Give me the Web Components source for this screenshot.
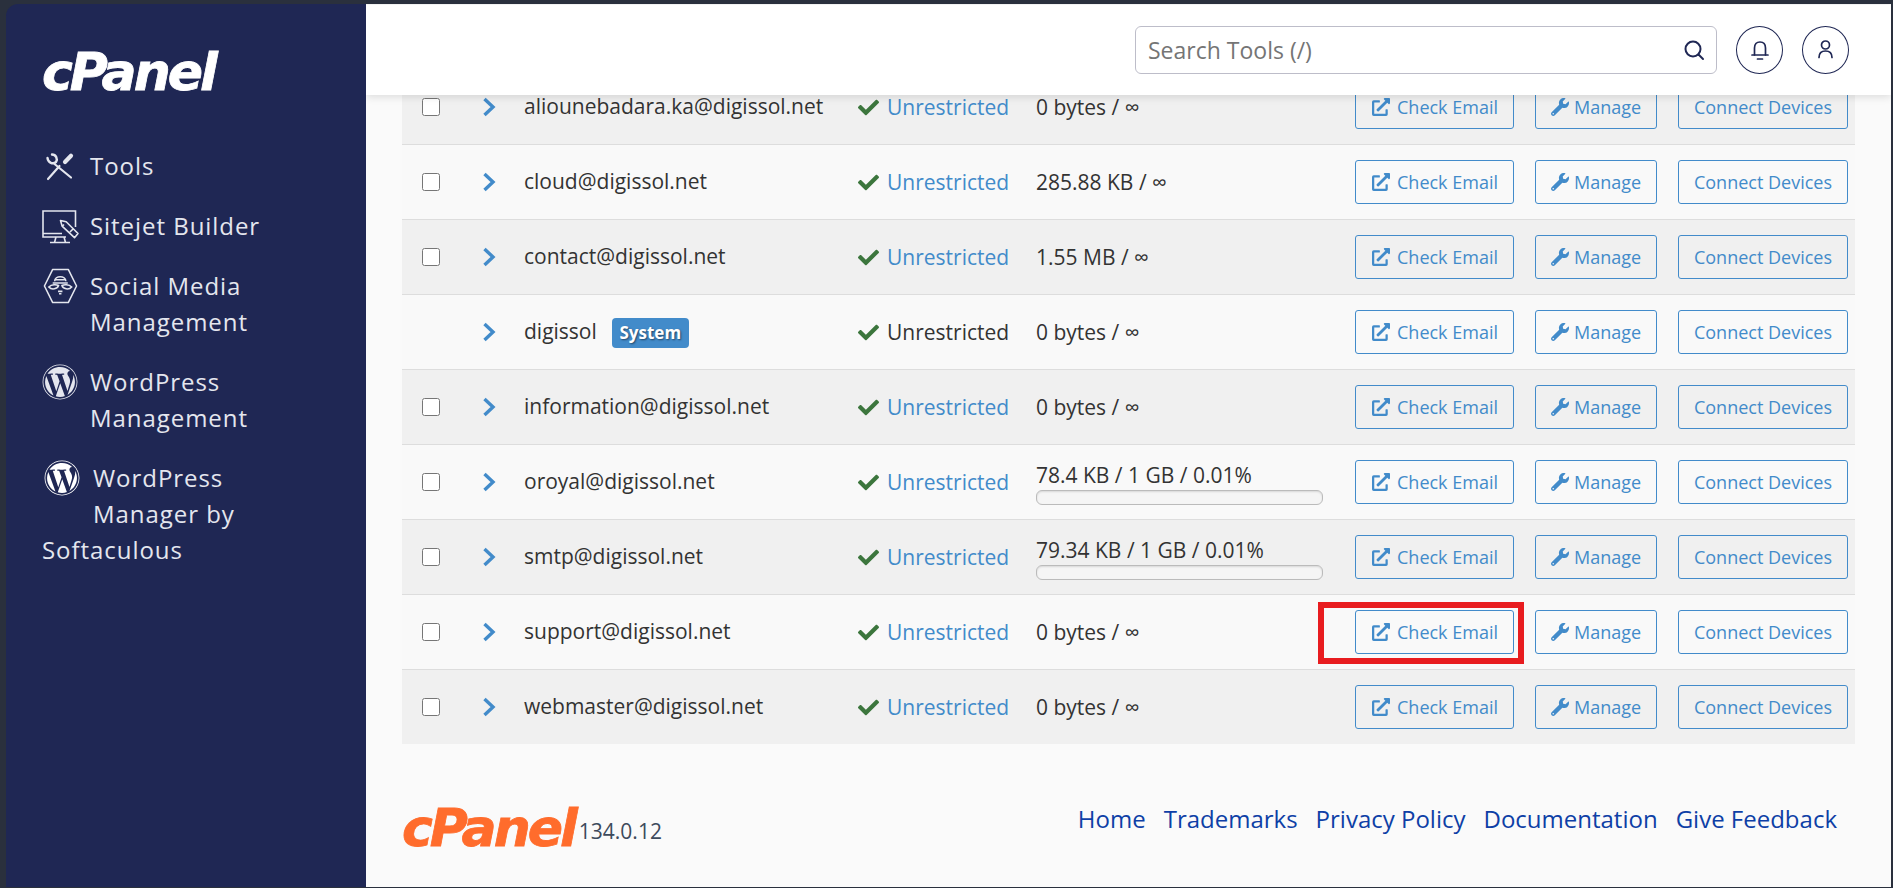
<!DOCTYPE html>
<html lang="en">
<head>
<meta charset="utf-8">
<title>Email Accounts</title>
<style>
  html, body { margin: 0; height: 100%; }
  body {
    background: #2a303d;
    font-family: "Open Sans", "Liberation Sans", sans-serif;
    color: #333;
    overflow: hidden;
  }
</style>
</head>
<body>
<cp-app>
  <cp-sidebar slot="side">
    <cp-nav icon="tools">Tools</cp-nav>
    <cp-nav icon="sitejet">Sitejet Builder</cp-nav>
    <cp-nav icon="social">Social Media Management</cp-nav>
    <cp-nav icon="wp">WordPress Management</cp-nav>
    <cp-nav icon="wp2" wrap>WordPress Manager by Softaculous</cp-nav>
  </cp-sidebar>
  <cp-topbar slot="top"></cp-topbar>
  <cp-row email="aliounebadara.ka@digissol.net" usage="0 bytes / ∞"></cp-row>
  <cp-row email="cloud@digissol.net" usage="285.88 KB / ∞"></cp-row>
  <cp-row email="contact@digissol.net" usage="1.55 MB / ∞"></cp-row>
  <cp-row email="digissol" usage="0 bytes / ∞" system></cp-row>
  <cp-row email="information@digissol.net" usage="0 bytes / ∞"></cp-row>
  <cp-row email="oroyal@digissol.net" usage="78.4 KB / 1 GB / 0.01%" bar></cp-row>
  <cp-row email="smtp@digissol.net" usage="79.34 KB / 1 GB / 0.01%" bar></cp-row>
  <cp-row email="support@digissol.net" usage="0 bytes / ∞" marked></cp-row>
  <cp-row email="webmaster@digissol.net" usage="0 bytes / ∞"></cp-row>
  <cp-footer slot="foot"></cp-footer>
</cp-app>

<script>
const ICONS = {
  tools: `<svg width="30" height="30" viewBox="0 0 30 30" fill="none" stroke="#e4e6ee" stroke-width="2.2" stroke-linecap="round">
    <path d="M3 28 L14.5 15"/><path d="M20 11 L26 4.800" stroke-width="4.200"/><path d="M9.500 13 L26 26.500"/>
    <path d="M7 3.500 C11 3.500 13 8 11 11 C8 13.500 3 12 2.500 7" stroke-width="2.400"/></svg>`,
  sitejet: `<svg width="36" height="35" viewBox="0 0 36 35" fill="none" stroke="#e4e6ee" stroke-width="1.6" style="overflow:visible">
    <path d="M33.500 18 V2 H1 V28 H24"/><path d="M1 24.500 H20"/><path d="M14 28 L12.500 33.500 M22 28 L23.500 33.500 M8 33.500 H28"/>
    <path d="M18.500 11.500 L24.200 12.700 L36 24.500 L32.500 28.700 L20.100 17.100Z M22 15.500 L20.500 17 M31 20 L28 23" stroke-linejoin="round"/></svg>`,
  social: `<svg width="37" height="36" viewBox="0 0 37 36" fill="none" stroke="#e4e6ee" stroke-width="1.600">
    <path d="M11 1 H27 L35.500 18 L27 35 H11 L2.500 18Z" stroke-linejoin="round"/>
    <path d="M13 13 C13 7 24.500 7 24.500 13 M13.500 11.500 H24 M11 15 H26.500 M7 19 C10 16 15 16.500 17 17.500 C16 21 10 22.500 7 19Z M30.500 19 C27.500 16 22.500 16.500 20.500 17.500 C21.500 21 27.500 22.500 30.500 19Z M16.500 23.500 H21 M17.500 26 H20"/></svg>`,
  wp: wpIcon("#e4e6ee"),
  wp2: wpIcon("#ffffff")
};

function wpIcon(color) {
  return `<svg width="36" height="36" viewBox="0 0 512 512" fill="${color}"><path d="M61.7 169.4l101.5 278C92.2 413 43.3 340.2 43.3 256c0-30.9 6.6-60.1 18.4-86.6zm337.9 75.9c0-26.3-9.4-44.5-17.5-58.7-10.8-17.5-20.9-32.4-20.9-49.9 0-19.6 14.8-37.8 35.7-37.8.9 0 1.8.1 2.8.2-37.9-34.7-88.3-55.9-143.7-55.9-74.3 0-139.7 38.1-177.8 95.9 5 .2 9.7.3 13.7.3 22.2 0 56.7-2.7 56.7-2.7 11.5-.7 12.8 16.2 1.4 17.5 0 0-11.5 1.4-24.3 2l77.5 230.4L249.8 247l-33.1-90.8c-11.5-.7-22.3-2-22.3-2-11.5-.7-10.1-18.2 1.3-17.5 0 0 35.1 2.7 56 2.7 22.2 0 56.7-2.7 56.7-2.7 11.5-.7 12.8 16.2 1.4 17.5 0 0-11.5 1.3-24.3 2l76.9 228.7 21.2-70.9c9-29.4 16-50.5 16-68.7zm-139.9 29.3l-63.8 185.5c19.1 5.6 39.2 8.7 60.1 8.7 24.8 0 48.5-4.3 70.6-12.1-.6-.9-1.1-1.9-1.5-2.9l-65.4-179.2zm183-120.7c.9 6.8 1.4 14 1.4 21.9 0 21.6-4 45.8-16.2 76.2l-65 187.9C426.2 403 468.7 334.5 468.7 256c0-37-9.4-71.8-26-102.1zM504 256c0 136.8-111.3 248-248 248C119.2 504 8 392.7 8 256 8 119.2 119.2 8 256 8c136.7 0 248 111.2 248 248zm-11.4 0c0-130.5-106.2-236.6-236.6-236.6C125.5 19.4 19.4 125.5 19.4 256S125.6 492.6 256 492.6c130.5 0 236.6-106.1 236.6-236.6z"/></svg>`;
}

class CpApp extends HTMLElement {
  constructor() {
    super();
    this.attachShadow({ mode: "open" }).innerHTML = `
      <style>
        :host {
          display: grid;
          grid-template-columns: 360px 1fr;
          height: 883px;
          margin: 4px 2px 1px 6px;
          border-top-left-radius: 12px;
          overflow: hidden;
        }
        main {
          background: #fafafa;
          min-width: 0;
          display: flex;
          flex-direction: column;
          overflow: hidden;
          padding-top: 1px;
        }
        .table { padding: 0 36px; margin-top: -25px; }
      </style>
      <slot name="side"></slot>
      <main>
        <slot name="top"></slot>
        <div class="table"><slot></slot></div>
        <slot name="foot"></slot>
      </main>`;
  }
}

class CpLogo extends HTMLElement {
  constructor() {
    super();
    this.attachShadow({ mode: "open" }).innerHTML = `
      <style>
        :host {
          display: inline-block;
          font: italic 700 52px/44px "DejaVu Sans", sans-serif;
          letter-spacing: -3px;
          color: var(--logo, #fff);
          -webkit-text-stroke: .8px var(--logo, #fff);
          white-space: nowrap;
        }
      </style>cPanel`;
  }
}

class CpSidebar extends HTMLElement {
  constructor() {
    super();
    this.attachShadow({ mode: "open" }).innerHTML = `
      <style>
        :host {
          display: flex;
          flex-direction: column;
          background: #1f2754;
          padding: 46px 16px 0 36px;
          box-sizing: border-box;
          color: #e4e6ee;
        }
        .logo { height: 44px; margin-bottom: 54px; }
        nav { display: flex; flex-direction: column; gap: 24px; }
      </style>
      <div class="logo"><cp-logo></cp-logo></div>
      <nav><slot></slot></nav>`;
  }
}

class CpNav extends HTMLElement {
  constructor() {
    super();
    const icon = ICONS[this.getAttribute("icon")];
    const wrap = this.hasAttribute("wrap");
    this.attachShadow({ mode: "open" }).innerHTML = `
      <style>
        :host {
          display: ${wrap ? "block" : "flex"};
          ${wrap ? "width: 250px;" : ""}
          font-size: 24px;
          line-height: 36px;
          letter-spacing: .95px;
          gap: 12px;
        }
        .ic { flex: 0 0 36px; width: 36px; height: 36px; display: flex; align-items: center; justify-content: center; }
        .ic.float { float: left; height: 60px; align-items: flex-start; margin: 0 13px 0 2px; width: 36px; }
        .txt { width: 200px; }
      </style>
      <span class="ic ${wrap ? "float" : ""}">${icon}</span>
      ${wrap ? "<slot></slot>" : '<span class="txt"><slot></slot></span>'}`;
  }
}

class CpTopbar extends HTMLElement {
  constructor() {
    super();
    this.attachShadow({ mode: "open" }).innerHTML = `
      <style>
        :host {
          display: flex;
          flex: 0 0 90px;
          height: 90px;
          box-sizing: border-box;
          align-items: center;
          justify-content: flex-end;
          gap: 19px;
          padding: 0 42px 0 0;
          background: #fff;
          box-shadow: 0 2px 8px rgba(0,0,0,.12);
          position: relative;
          z-index: 2;
        }
        .search {
          width: 582px; height: 48px; box-sizing: border-box;
          border: 1px solid #bdbdc9; border-radius: 6px;
          display: flex; align-items: center; padding: 0 11px 0 12px;
        }
        input {
          flex: 1; border: 0; outline: 0; background: none; padding: 0; min-width: 0;
          font: 23px "Open Sans", sans-serif;
        }
        input::placeholder { color: #757575; opacity: 1; }
        .round {
          width: 47px; height: 48px; box-sizing: border-box; border: 1.5px solid #1f2754;
          border-radius: 50%; display: flex; align-items: center; justify-content: center;
        }
        svg { display: block; fill: none; stroke: #1f2754; stroke-linecap: round; }
      </style>
      <div class="search">
        <input type="text" placeholder="Search Tools (/)">
        <svg width="22" height="22" viewBox="0 0 22 22" stroke-width="2"><circle cx="10" cy="10" r="7.500"/><path d="M15.500 15.500 L20 20"/></svg>
      </div>
      <div class="round"><svg width="18" height="22" viewBox="0 0 18 22" stroke-width="1.700"><path d="M3.500 16 V9 C3.500 5 5.500 3 9 3 C12.500 3 14.500 5 14.500 9 V16"/><path d="M1 16 H17 M6.500 20 H11.500"/></svg></div>
      <div class="round"><svg width="18" height="22" viewBox="0 0 18 22" stroke-width="1.700"><circle cx="8.500" cy="6" r="4"/><path d="M2 18.500 C2 14.500 4.500 12 8.500 12 C12.500 12 15 14.500 15 18.500"/></svg></div>`;
  }
}

class CpBtn extends HTMLElement {
  constructor() {
    super();
    this.attachShadow({ mode: "open" }).innerHTML = `
      <style>
        :host {
          display: inline-flex;
          position: relative;
          align-items: center;
          justify-content: center;
          gap: 7px;
          box-sizing: border-box;
          height: 44px;
          border: 1px solid #428bca;
          border-radius: 3px;
          color: #428bca;
          font-size: 18px;
          white-space: nowrap;
        }
        :host([marked])::after {
          content: "";
          position: absolute;
          left: -38px; right: -11px; top: -9px; bottom: -11px;
          border: 6px solid #e81c1f;
          pointer-events: none;
        }
        svg { fill: #428bca; display: block; }
      </style>
      <slot name="icon"></slot><slot></slot>`;
  }
}

class CpRow extends HTMLElement {
  constructor() {
    super();
    const email = this.getAttribute("email");
    const usage = this.getAttribute("usage");
    const system = this.hasAttribute("system");
    const bar = this.hasAttribute("bar");
    const marked = this.hasAttribute("marked") ? "marked" : "";
    this.attachShadow({ mode: "open" }).innerHTML = `
      <style>
        :host {
          display: grid;
          grid-template-columns: 81px 41px 334px 178px 319px auto;
          align-items: center;
          height: 75px;
          box-sizing: border-box;
          border-bottom: 1px solid #ddd;
          background: #f9f9f9;
          font-size: 21px;
        }
        :host(:nth-child(odd)) { background: #f0f0f0; }
        :host(:last-of-type) { border-bottom: 0; height: 74px; }
        .sel { padding-left: 20px; }
        input { width: 18px; height: 18px; margin: 0; display: block; }
        .mail { display: flex; align-items: center; gap: 15px; margin-top: -3px; white-space: nowrap; }
        .badge {
          background: #428bca; color: #fff; font-size: 17px; font-weight: 700;
          height: 30px; line-height: 30px; width: 77px; text-align: center; border-radius: 4px;
          text-shadow: 1px 1px 2px rgba(0,0,0,.5); margin-top: 5px;
        }
        .status { display: flex; align-items: center; gap: 8px; }
        .status span { color: ${system ? "#333" : "#428bca"}; }
        .status svg { fill: #3c763d; display: block; }
        .usage { width: 287px; }
        .usage div { line-height: 24px; }
        .bar {
          height: 15px; box-sizing: border-box; margin-top: 3px; margin-bottom: -18px;
          border: 1px solid #bbb; border-radius: 6px; background: #f5f5f5;
          box-shadow: inset 0 1px 2px rgba(0,0,0,.12);
        }
        .acts { display: flex; gap: 21px; }
        .acts cp-btn:nth-child(1) { width: 159px; padding-left: 1px; }
        .acts cp-btn:nth-child(2) { width: 122px; gap: 5px; }
        .acts cp-btn:nth-child(3) { width: 170px; }
      </style>
      <div class="sel">${system ? "" : '<input type="checkbox">'}</div>
      <svg width="14" height="20" viewBox="0 0 14 20" fill="none" stroke="#428bca" stroke-width="3.400"><path d="M1.500 2 L10 10 L1.500 18"/></svg>
      <div class="mail"><span>${email}</span>${system ? '<span class="badge">System</span>' : ""}</div>
      <div class="status">
        <svg width="21" height="21" viewBox="0 0 512 512"><path d="M173.898 439.404l-166.4-166.4c-9.997-9.997-9.997-26.206 0-36.204l36.203-36.204c9.997-9.998 26.207-9.998 36.204 0L192 312.69 432.095 72.596c9.997-9.997 26.207-9.997 36.204 0l36.203 36.204c9.997 9.997 9.997 26.206 0 36.204l-294.4 294.401c-9.998 9.997-26.207 9.997-36.204-.001z"/></svg>
        <span>Unrestricted</span>
      </div>
      <div class="usage" style="${bar ? "margin-top:-14px" : ""}"><div>${usage}</div>${bar ? '<div class="bar"></div>' : ""}</div>
      <div class="acts">
        <cp-btn ${marked}><svg slot="icon" width="18" height="18" viewBox="0 0 512 512" fill="#428bca"><path d="M432,320H400a16,16,0,0,0-16,16V448H64V128H208a16,16,0,0,0,16-16V80a16,16,0,0,0-16-16H48A48,48,0,0,0,0,112V464a48,48,0,0,0,48,48H400a48,48,0,0,0,48-48V336A16,16,0,0,0,432,320ZM488,0h-128c-21.370,0-32.050,25.910-17,41l35.730,35.730L135,320.370a24,24,0,0,0,0,34L157.670,377a24,24,0,0,0,34,0L435.280,133.320,471,169c15,15,41,4.500,41-17V24A24,24,0,0,0,488,0Z"/></svg>Check Email</cp-btn>
        <cp-btn><svg slot="icon" width="18" height="18" viewBox="0 0 512 512" fill="#428bca"><path d="M507.73 109.100c-2.240-9.030-13.540-12.090-20.120-5.510l-74.360 74.360-67.880-11.310-11.310-67.880 74.360-74.360c6.620-6.620 3.430-17.900-5.660-20.160-47.380-11.740-99.550.91-136.58 37.930-39.640 39.640-50.550 97.100-34.050 147.200L18.740 402.760c-24.990 24.990-24.990 65.510 0 90.500 24.990 24.990 65.510 24.990 90.500 0l213.210-213.210c50.120 16.710 107.470 5.680 147.370-34.220 37.070-37.070 49.700-89.320 37.910-136.730zM64 472c-13.250 0-24-10.750-24-24 0-13.260 10.750-24 24-24s24 10.740 24 24c0 13.250-10.750 24-24 24z"/></svg>Manage</cp-btn>
        <cp-btn>Connect Devices</cp-btn>
      </div>`;
  }
}

class CpFooter extends HTMLElement {
  constructor() {
    super();
    this.attachShadow({ mode: "open" }).innerHTML = `
      <style>
        :host {
          display: flex;
          justify-content: space-between;
          align-items: flex-start;
          padding: 61px 54px 0 36px;
        }
        .brand { display: flex; align-items: flex-end; --logo: #ff6c2c; gap: 4px; margin-top: 1px; }
        .ver { font-size: 21px; color: #3d4a5c; line-height: 26px; margin-bottom: 6px; }
        .links { display: flex; gap: 18px; font-size: 24px; line-height: 28px; }
        a { color: #0e3fa6; text-decoration: none; }
      </style>
      <div class="brand"><cp-logo></cp-logo><span class="ver">134.0.12</span></div>
      <div class="links">
        <a href="#">Home</a><a href="#">Trademarks</a><a href="#">Privacy Policy</a><a href="#">Documentation</a><a href="#">Give Feedback</a>
      </div>`;
  }
}

customElements.define("cp-logo", CpLogo);
customElements.define("cp-nav", CpNav);
customElements.define("cp-sidebar", CpSidebar);
customElements.define("cp-topbar", CpTopbar);
customElements.define("cp-btn", CpBtn);
customElements.define("cp-row", CpRow);
customElements.define("cp-footer", CpFooter);
customElements.define("cp-app", CpApp);
</script>
</body>
</html>
